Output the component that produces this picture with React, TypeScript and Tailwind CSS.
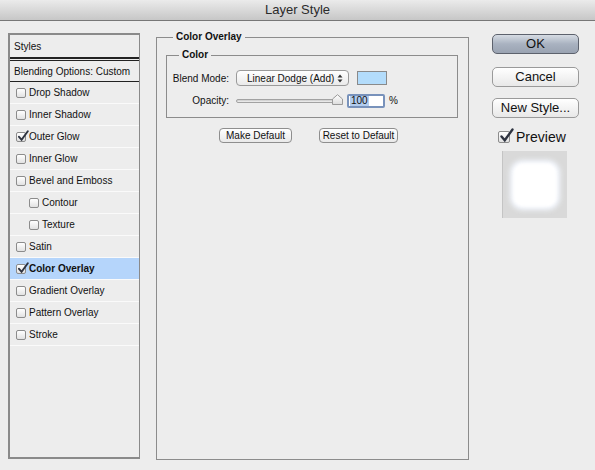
import React from 'react';

const Check: React.FC<{ checked?: boolean; big?: boolean }> = ({ checked, big }) => (
  <span
    className={`relative inline-block shrink-0 rounded-[2px] border border-[#8c8c8c] bg-linear-to-b from-white to-[#e2e2e2] ${
      big ? 'w-[12px] h-[12px]' : 'w-[10px] h-[10px]'
    }`}
  >
    {checked && (
      <svg
        className={big ? 'absolute -top-[4px] left-[0px]' : 'absolute -top-[3px] left-[0px]'}
        width={big ? 15 : 12}
        height={big ? 15 : 12}
        viewBox="0 0 12 12"
      >
        <path d="M2 6.8 L4.6 9.8 L10.8 1.2" stroke="#2e3340" strokeWidth="1.9" fill="none" strokeLinecap="round" />
      </svg>
    )}
  </span>
);

const styleRows = [
  { label: 'Drop Shadow' },
  { label: 'Inner Shadow' },
  { label: 'Outer Glow', checked: true },
  { label: 'Inner Glow' },
  { label: 'Bevel and Emboss' },
  { label: 'Contour', sub: true },
  { label: 'Texture', sub: true },
  { label: 'Satin' },
  { label: 'Color Overlay', checked: true, active: true },
  { label: 'Gradient Overlay' },
  { label: 'Pattern Overlay' },
  { label: 'Stroke' },
];

const SmallButton: React.FC<{ width: string; children: React.ReactNode }> = ({ width, children }) => (
  <div
    className={`${width} h-[15px] flex items-center justify-center rounded-[4px] border border-[#8e8e8e] bg-linear-to-b from-white to-[#e9e9e9] text-[10px]`}
  >
    {children}
  </div>
);

const BigButton: React.FC<{ primary?: boolean; className?: string; children: React.ReactNode }> = ({
  primary,
  className = '',
  children,
}) => (
  <div
    className={`h-[20px] flex items-center justify-center rounded-[5px] border text-[13px] ${
      primary
        ? 'border-[#5d626d] bg-linear-to-b from-[#d6dce4] via-[#a9b2c0] to-[#9aa3b2]'
        : 'border-[#9a9a9a] bg-linear-to-b from-white to-[#e8e8e8]'
    } ${className}`}
  >
    {children}
  </div>
);

export default function App() {
  return (
    <div className="w-[595px] h-[470px] overflow-hidden bg-[#ededed] text-[10px] text-[#111] font-['Liberation_Sans',Arial,sans-serif]">
      {/* title bar */}
      <div className="h-[21px] flex items-center justify-center border-b border-[#777] bg-linear-to-b from-[#ebebeb] to-[#c7c7c7] text-[13px] text-[#2b2b2b]">
        Layer Style
      </div>

      <div className="flex items-start pl-[8px] pt-[10px]">
        {/* styles list */}
        <div className="mt-[2px] w-[132px] h-[426px] border-t-2 border-l-2 border-b-2 border-r border-[#8a8a8a]">
          <div className="h-[24px] flex items-center pl-[4px] pt-[1px] border-b-2 border-[#222]">Styles</div>
          <div className="h-[22px] flex items-center pl-[4px] mt-[1px] border-t border-b border-[#222]">
            Blending Options: Custom
          </div>
          {styleRows.map((r) => (
            <div
              key={r.label}
              className={`h-[22px] flex items-center gap-[3px] border-b border-[#fafafa] ${
                r.sub ? 'pl-[19px]' : 'pl-[6px]'
              } ${r.active ? 'bg-[#b5d5fb] font-bold' : ''}`}
            >
              <Check checked={r.checked} />
              <span>{r.label}</span>
            </div>
          ))}
        </div>

        {/* color overlay settings */}
        <fieldset className="ml-[16px] w-[313px] h-[429px] border border-[#8c8c8c] px-[9px]">
          <legend className="ml-[7px] px-[3px] font-bold leading-[12px]">Color Overlay</legend>
          <fieldset className="mt-[6px] w-[292px] border border-[#8c8c8c] pt-[9px] pb-[9px]">
            <legend className="ml-[12px] px-[3px] font-bold leading-[12px]">Color</legend>
            <div className="flex items-center h-[16px]">
              <span className="w-[62px] text-right">Blend Mode:</span>
              <div className="ml-[7px] w-[113px] h-[16px] flex items-center justify-between pl-[10px] pr-[5px] rounded-[4px] border border-[#9a9a9a] bg-linear-to-b from-white to-[#eaeaea]">
                <span>Linear Dodge (Add)</span>
                <svg width="6" height="9" viewBox="0 0 6 9">
                  <path d="M3 0.5 L5.5 3.5 L0.5 3.5 Z" fill="#333" />
                  <path d="M3 8.5 L5.5 5.5 L0.5 5.5 Z" fill="#333" />
                </svg>
              </div>
              <div className="ml-[8px] w-[30px] h-[14px] border border-[#8a8a8a] bg-[#b3dcfb]" />
            </div>
            <div className="flex items-center h-[15px] mt-[7px]">
              <span className="w-[62px] text-right">Opacity:</span>
              <div className="relative ml-[7px] w-[107px] h-[15px] flex items-center">
                <div className="w-[102px] h-[4px] rounded-full border border-[#a2a2a2] bg-linear-to-b from-[#c9c9c9] to-[#f2f2f2]" />
                <svg className="absolute right-0 top-[1px]" width="11" height="11" viewBox="0 0 11 11">
                  <defs>
                    <linearGradient id="th" x1="0" y1="0" x2="0" y2="1">
                      <stop offset="0" stopColor="#ffffff" />
                      <stop offset="1" stopColor="#dcdcdc" />
                    </linearGradient>
                  </defs>
                  <path d="M0.5 10.5 L0.5 5 L5.5 0.7 L10.5 5 L10.5 10.5 Z" fill="url(#th)" stroke="#9a9a9a" />
                </svg>
              </div>
              <div className="ml-[4px] w-[38px] h-[14px] flex items-center border-2 border-[#7892bb] rounded-[2px] bg-white">
                <span className="ml-[1px] px-[1px] bg-[#b3cdee] leading-[10px]">100</span>
              </div>
              <span className="ml-[4px]">%</span>
            </div>
          </fieldset>
          <div className="flex mt-[10px] pl-[53px] gap-[27px]">
            <SmallButton width="w-[73px]">Make Default</SmallButton>
            <SmallButton width="w-[79px]">Reset to Default</SmallButton>
          </div>
        </fieldset>

        {/* buttons and preview */}
        <div className="ml-[23px] mt-[3px] w-[87px] flex flex-col">
          <BigButton primary>OK</BigButton>
          <BigButton className="mt-[13px]">Cancel</BigButton>
          <BigButton className="mt-[11px]">New Style...</BigButton>
          <div className="mt-[13px] ml-[6px] flex items-center gap-[6px] h-[12px]">
            <Check checked big />
            <span className="text-[14px]">Preview</span>
          </div>
          <div className="mt-[8px] ml-[10px] w-[65px] h-[67px] bg-[#d9d9d9] border-l border-[#c4c4c4] flex items-center justify-center">
            <div className="w-[44px] h-[44px] rounded-[10px] bg-white blur-[1.5px] shadow-[0_0_4px_3px_#f4f8ff]" />
          </div>
        </div>
      </div>
    </div>
  );
}
